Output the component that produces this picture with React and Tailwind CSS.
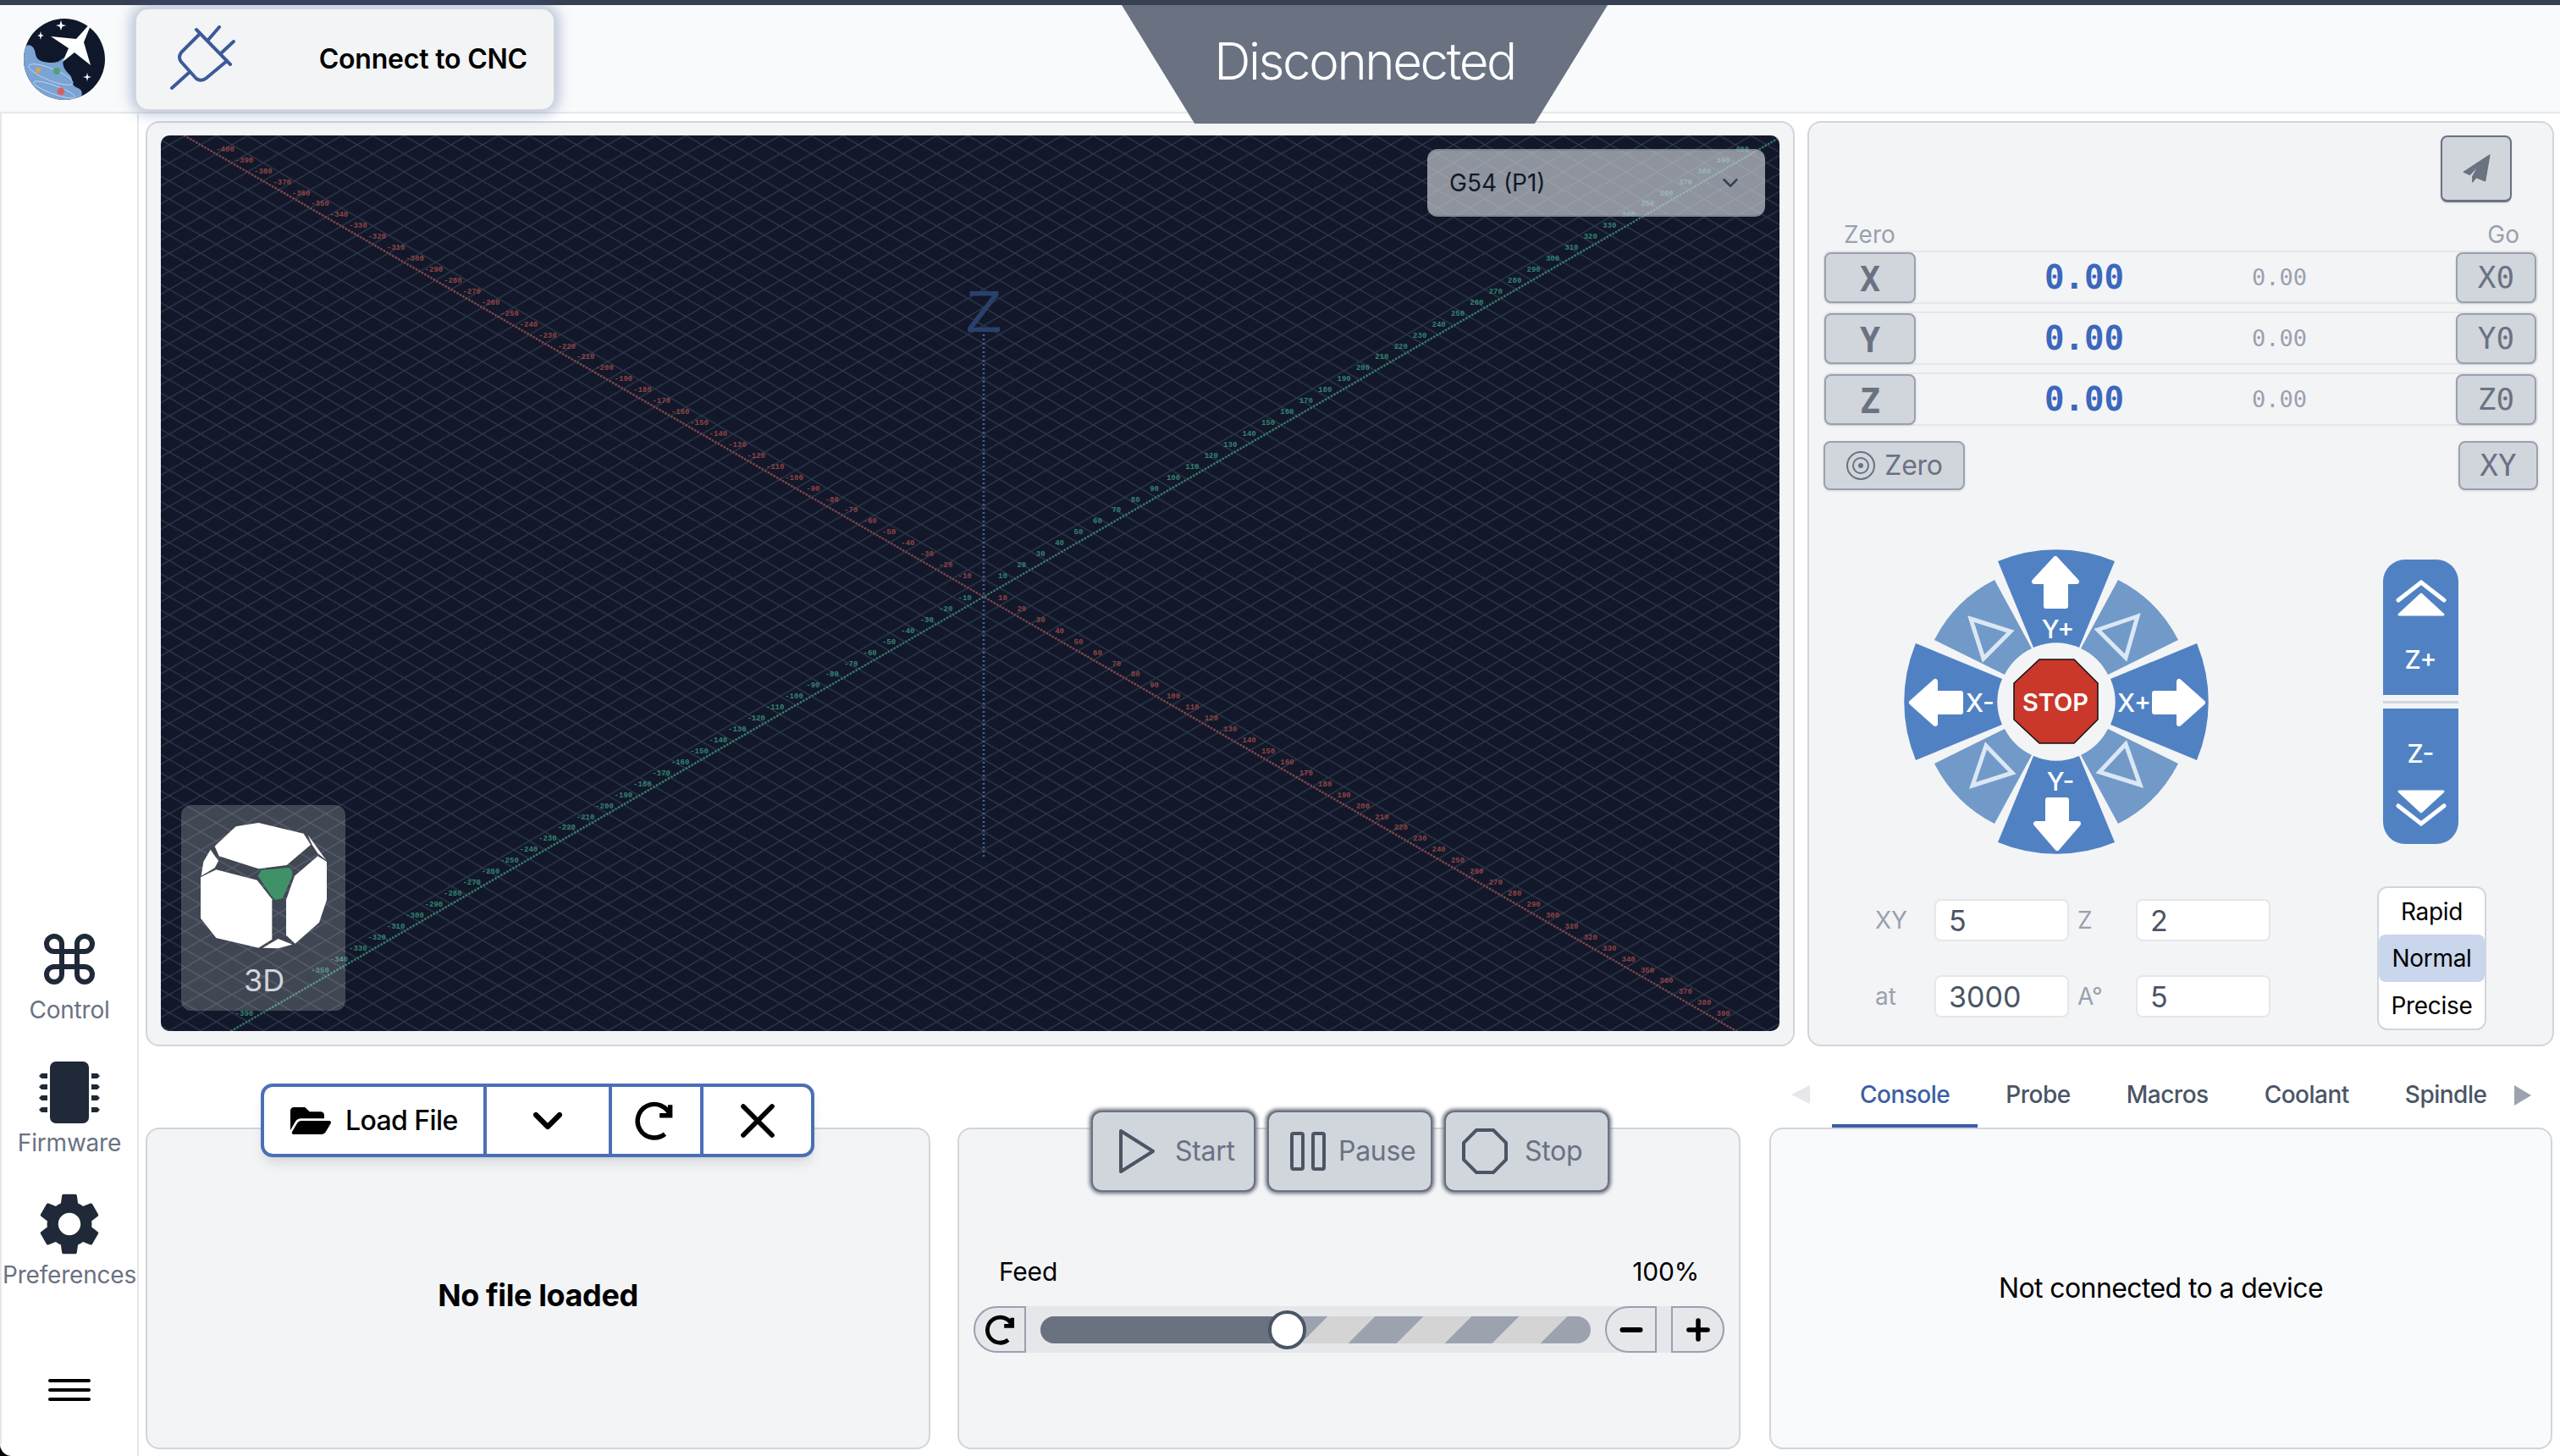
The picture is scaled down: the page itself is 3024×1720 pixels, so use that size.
import { ChevronDown, Command, Minus, Plus, X } from 'lucide-react';
import { FaFolderOpen } from 'react-icons/fa';
import { MdSettings } from 'react-icons/md';

const CX = 972;
const CY = 545;
const RED = '#8f4347';
const GREEN = '#348270';

// axis tick labels, skipping the ones that would hit the canvas edge or the 3D caption
const axisLabels = Array.from({ length: 46 }, (_, i) => i + 1)
  .flatMap((t) => [
    { key: `a${t}`, x: CX - 22.4 * t, y: CY - 12.93 * t - 9, text: -t * 10, fill: RED },
    { key: `b${t}`, x: CX + 22.4 * t, y: CY + 12.93 * t - 9, text: t * 10, fill: RED },
    { key: `c${t}`, x: CX + 22.4 * t, y: CY - 12.93 * t - 9, text: t * 10, fill: GREEN },
    { key: `d${t}`, x: CX - 22.4 * t, y: CY + 12.93 * t - 9, text: -t * 10, fill: GREEN },
  ])
  .filter((l) => l.x > 24 && l.x < 1888 && l.y > 16 && l.y < 1046)
  .filter((l) => !(l.x > 60 && l.x < 180 && l.y > 960 && l.y < 1030));

function RefreshIcon({ size, strokeWidth }) {
  return (
    <svg width={size} height={size} viewBox="0 0 24 24" fill="none" stroke="#000" strokeWidth={strokeWidth} strokeLinecap="butt">
      <path d="M20 3 V9 H14" />
      <path d="M20 9 A9.5 9.5 0 1 0 17 19.5" />
    </svg>
  );
}

function Logo() {
  return (
    <svg width="96" height="96" viewBox="0 0 96 96" className="shrink-0">
      <defs>
        <clipPath id="logoClip">
          <circle cx="48" cy="48" r="48" />
        </clipPath>
      </defs>
      <circle cx="48" cy="48" r="48" fill="#0f172a" />
      <g clipPath="url(#logoClip)">
        <path d="M0 34 C6 28 13 32 14 42 C15 50 24 52 34 52 C42 52 44 48 48 46 C44 54 48 60 54 66 C60 72 54 78 64 82 C70 84 70 90 66 96 L0 96 Z" fill="#7ba3d4" />
        <ellipse cx="32" cy="66" rx="28" ry="7" transform="rotate(22 32 66)" fill="none" stroke="#c9dcf0" strokeWidth="0.8" />
        <ellipse cx="36" cy="84" rx="26" ry="5" transform="rotate(20 36 84)" fill="none" stroke="#c9dcf0" strokeWidth="0.8" />
      </g>
      <circle cx="17" cy="61" r="3.2" fill="#d9a05a" />
      <circle cx="39" cy="62" r="4" fill="#4fa36f" />
      <circle cx="44" cy="86" r="4.4" fill="#d9605a" />
      <path d="M81 3 L62 24 L32 21 L53 35 L46 51 L60 40 L79 55 L71 28 Z" fill="#fff" />
      <path d="M44 2 L45.5 7 L50 8 L45.5 9.5 L44 14 L42.5 9.5 L38 8 L42.5 7 Z" fill="#fff" />
      <path d="M20 15 L21 19 L24 20 L21 21 L20 25 L19 21 L16 20 L19 19 Z" fill="#fff" />
      <path d="M75 64 L76 68 L80 69 L76 70 L75 74 L74 70 L70 69 L74 68 Z" fill="#fff" />
    </svg>
  );
}

function PlugIcon() {
  return (
    <svg width="80" height="80" viewBox="200 30 80 80" fill="none" stroke="#3b5a9a" strokeWidth="4" strokeLinecap="round" strokeLinejoin="round">
      <path d="M231 35 L271 76" />
      <path d="M235 40 L213 62 Q209 68 213 73 L231 93 Q237 97 243 92 L267 72" />
      <path d="M245 47 L258 32" />
      <path d="M260 63 L275 49" />
      <path d="M222 86 L202 104" />
    </svg>
  );
}

function ChipIcon() {
  const pins = [0, 13, 26, 40];
  return (
    <svg width="72" height="73" viewBox="0 0 72 73" fill="#1f2937">
      <rect x="13" y="0" width="46" height="73" rx="7" />
      {pins.map((y) => (
        <g key={y}>
          <path d={`M0 ${y + 17} L3 ${y + 14} H10 V${y + 20} H3 Z`} />
          <path d={`M72 ${y + 17} L69 ${y + 14} H62 V${y + 20} H69 Z`} />
        </g>
      ))}
    </svg>
  );
}

function NavItem({ icon, label, className }) {
  return (
    <div className={`flex flex-col items-center ${className}`}>
      <div className="h-[74px] mb-[6px] flex items-center justify-center">{icon}</div>
      <span className="text-[28px] leading-[34px] tracking-[-0.2px] text-gray-500">{label}</span>
    </div>
  );
}

function Sidebar() {
  return (
    <div className="w-[164px] shrink-0 flex flex-col items-center justify-end bg-white border-r-2 border-l-2 border-gray-200 pb-[65px]">
      <NavItem icon={<Command size={72} color="#1f2937" strokeWidth={2} />} label="Control" className="mb-[43px]" />
      <NavItem icon={<ChipIcon />} label="Firmware" className="mb-[42px]" />
      <NavItem icon={<MdSettings size={88} color="#1f2937" />} label="Preferences" className="mb-[106px]" />
      <div className="w-[50px] flex flex-col gap-[7px]">
        <div className="h-[4px] bg-black rounded-full" />
        <div className="h-[4px] bg-black rounded-full" />
        <div className="h-[4px] bg-black rounded-full" />
      </div>
    </div>
  );
}

function Header() {
  return (
    <div className="h-[128px] shrink-0 relative flex items-start bg-gray-50 border-b-2 border-gray-200">
      <div className="ml-[28px] mt-[16px]">
        <Logo />
      </div>
      <button className="ml-[35px] mt-[3px] w-[497px] h-[122px] flex items-center justify-between pl-[40px] pr-[31px] rounded-[16px] bg-gray-100 border-2 border-gray-300 shadow-[0_0_16px_4px_rgba(59,90,154,0.35)] z-10">
        <PlugIcon />
        <span className="text-[32px] font-semibold tracking-[-0.2px] text-black">Connect to CNC</span>
      </button>
      <div className="absolute left-[1325px] top-0 w-[574px] h-[140px] z-10 flex items-center justify-center pb-[8px] bg-gray-500 [clip-path:polygon(0_0,100%_0,85%_100%,15%_100%)]">
        <span className="text-[60px] font-light tracking-[-2.4px] text-white">Disconnected</span>
      </div>
    </div>
  );
}

function ViewCube() {
  return (
    <div className="absolute left-[24px] top-[791px] w-[194px] h-[243px] rounded-[12px] bg-white/20 flex flex-col items-center pt-[21px] pl-[2px]">
      <svg width="150" height="150" viewBox="145 127 450 450" fill="#fff">
        <polygon points="195,210 270,140 350,127 510,165 535,205 450,277 350,290 210,245" />
        <polygon points="180,222 208,262 195,287 147,315 155,265" />
        <polygon points="145,320 200,293 345,330 398,398 398,540 350,570 200,535 145,465" />
        <polygon points="478,315 560,245 592,265 592,400 565,480 480,555 448,525 448,400" />
        <polygon points="525,170 590,260 560,235 540,205" />
        <polygon points="365,570 420,538 470,558 420,572" />
        <polygon points="348,315 360,295 460,285 470,300 470,315 435,395 410,400 395,385" fill="#3f9268" />
      </svg>
      <span className="mt-[14px] text-[36px] leading-[44px] text-gray-300">3D</span>
    </div>
  );
}

function SceneCanvas() {
  return (
    <svg width="1912" height="1058" className="block [font-family:'Liberation_Mono',monospace]">
      <defs>
        <pattern id="isoGrid" width="37" height="21.36" patternUnits="userSpaceOnUse" patternTransform={`translate(${CX} ${CY})`}>
          <path d="M0 0 L37 21.36 M0 21.36 L37 0" stroke="#2e394c" strokeWidth="1.3" />
        </pattern>
      </defs>
      <rect width="1912" height="1058" fill="#121829" />
      <rect width="1912" height="1058" fill="url(#isoGrid)" />
      <line x1={CX - 1000} y1={CY - 577} x2={CX + 1000} y2={CY + 577} stroke={RED} strokeWidth="2.5" strokeDasharray="2 2" />
      <line x1={CX - 1000} y1={CY + 577} x2={CX + 1000} y2={CY - 577} stroke={GREEN} strokeWidth="2.5" strokeDasharray="2 2" />
      <line x1={CX} y1={235} x2={CX} y2={852} stroke="#46619a" strokeWidth="2.5" strokeDasharray="2 3" />
      <text x={CX} y={232} textAnchor="middle" fontSize="72" fill="#2a3f6a">Z</text>
      <g fontSize="9" fontWeight="700" textAnchor="middle">
        {axisLabels.map((l) => (
          <text key={l.key} x={l.x} y={l.y} fill={l.fill}>{l.text}</text>
        ))}
      </g>
    </svg>
  );
}

function ViewerPanel() {
  return (
    <div className="w-[1948px] h-[1093px] shrink-0 rounded-[16px] border-2 border-gray-300 bg-gray-100 pl-[16px] pt-[15px]">
      <div className="relative w-[1912px] h-[1058px] rounded-[10px] overflow-hidden">
        <SceneCanvas />
        <div className="absolute left-[1496px] top-[16px] w-[399px] h-[80px] rounded-[12px] bg-[#d1d5db]/65 border-y-2 border-gray-500/40 flex items-center justify-between pl-[26px] pr-[26px]">
          <span className="text-[28px] text-gray-900">G54 (P1)</span>
          <ChevronDown size={30} color="#374151" strokeWidth={2} />
        </div>
        <ViewCube />
      </div>
    </div>
  );
}

function AxisRow({ axis, go }) {
  return (
    <div className="h-[63px] flex items-center rounded-[8px] border-2 border-gray-200 [font-family:'DejaVu_Sans_Mono',monospace]">
      <button className="w-[108px] h-[60px] -ml-[1px] rounded-[8px] bg-gray-300 border-2 border-gray-400 shadow-sm text-[40px] font-bold text-gray-500">{axis}</button>
      <span className="ml-[152px] w-[245px] pt-[2px] text-[39px] font-bold text-[#3b67bd]">0.00</span>
      <span className="w-[241px] pt-[2px] text-[27px] text-gray-400">0.00</span>
      <button className="w-[95px] h-[60px] rounded-[8px] bg-gray-300 border-2 border-gray-400 shadow-sm text-[36px] text-gray-500">{go}</button>
    </div>
  );
}

function JogWheel() {
  return (
    <svg width="362" height="362" viewBox="2248 648 362 362" className="shrink-0 [font-family:Inter,sans-serif]">
      <g fill="#719ac8">
        <path d="M2502 685 A161 161 0 0 1 2573 756 L2490 797 A69 69 0 0 0 2458 766 Z" />
        <path d="M2356 685 A161 161 0 0 0 2285 756 L2368 797 A69 69 0 0 1 2400 766 Z" />
        <path d="M2502 973 A161 161 0 0 0 2573 902 L2490 861 A69 69 0 0 1 2458 892 Z" />
        <path d="M2356 973 A161 161 0 0 1 2285 902 L2368 861 A69 69 0 0 0 2400 892 Z" />
      </g>
      <g fill="none" stroke="#dbe7f5" strokeWidth="5">
        <polygon points="2328,731 2375,746 2343,778" />
        <polygon points="2525,728 2478,744 2511,777" />
        <polygon points="2346,881 2377,913 2330,928" />
        <polygon points="2511,879 2480,912 2528,927" />
      </g>
      <g fill="#5082c3">
        <path d="M2360 663 A180 180 0 0 1 2498 663 L2456 765 A69 69 0 0 0 2402 765 Z" />
        <path d="M2360 995 A180 180 0 0 0 2498 995 L2456 893 A69 69 0 0 1 2402 893 Z" />
        <path d="M2595 760 A180 180 0 0 1 2595 898 L2493 856 A69 69 0 0 0 2493 802 Z" />
        <path d="M2263 760 A180 180 0 0 0 2263 898 L2365 856 A69 69 0 0 1 2365 802 Z" />
      </g>
      <g fill="#fff" stroke="#fff" strokeWidth="6" strokeLinejoin="round">
        <path d="M2428 660 L2403 687 H2417 V716 H2440 V687 H2453 Z" />
        <path d="M2430 1002 L2405 973 H2419 V945 H2441 V973 H2455 Z" />
        <path d="M2602 830 L2574 805 V819 H2545 V841 H2574 V855 Z" />
        <path d="M2258 830 L2286 805 V819 H2316 V841 H2286 V855 Z" />
      </g>
      <polygon points="2409,779 2450,779 2478,807 2478,850 2450,878 2409,878 2379,850 2379,807" fill="#c9382b" stroke="#111" strokeWidth="1.5" />
      <g fill="#fff" textAnchor="middle" fontWeight="500" fontSize="30">
        <text x="2428" y="840" fontSize="29" fontWeight="600">STOP</text>
        <text x="2431" y="754">Y+</text>
        <text x="2434" y="934">Y-</text>
        <text x="2521" y="841">X+</text>
        <text x="2339" y="841">X-</text>
      </g>
    </svg>
  );
}

function ZJog() {
  return (
    <div className="w-[89px] shrink-0 mt-[13px] flex flex-col text-white font-medium text-[30px]">
      <button className="h-[160px] rounded-t-[26px] bg-[#5082c3] flex flex-col items-center pt-[24px]">
        <svg width="60" height="44" viewBox="0 0 60 44" fill="none">
          <path d="M3 24 L30 3 L57 24" stroke="#fff" strokeWidth="5" strokeLinecap="round" />
          <path d="M30 17 L56 41 H4 Z" fill="#fff" stroke="#fff" strokeWidth="3" strokeLinejoin="round" />
        </svg>
        <span className="mt-[33px] leading-[34px]">Z+</span>
      </button>
      <div className="h-[16px] flex items-center">
        <div className="h-[3px] w-full bg-gray-300" />
      </div>
      <button className="h-[160px] rounded-b-[26px] bg-[#5082c3] flex flex-col items-center pt-[36px]">
        <span className="leading-[34px]">Z-</span>
        <svg className="mt-[25px]" width="60" height="44" viewBox="0 0 60 44" fill="none">
          <path d="M3 20 L30 41 L57 20" stroke="#fff" strokeWidth="5" strokeLinecap="round" />
          <path d="M30 27 L56 3 H4 Z" fill="#fff" stroke="#fff" strokeWidth="3" strokeLinejoin="round" />
        </svg>
      </button>
    </div>
  );
}

function StepField({ label, value, labelWidth }) {
  return (
    <div className="flex items-center">
      <span className={`text-[28px] text-gray-400 ${labelWidth}`}>{label}</span>
      <div className="w-[159px] h-[50px] rounded-[8px] bg-white border-2 border-gray-200 pl-[15px] flex items-center text-[34px] text-gray-600">{value}</div>
    </div>
  );
}

function ControlPanel() {
  return (
    <div className="flex-1 h-[1093px] rounded-[16px] border-2 border-gray-300 bg-gray-100 px-[17px]">
      <div className="flex justify-end pr-[31px] pt-[15px]">
        <button className="w-[84px] h-[79px] rounded-[8px] bg-gray-300 border-2 border-gray-500 border-b-[3px] shadow-sm flex items-center justify-center">
          <svg width="34" height="34" viewBox="0 0 32 32" fill="#6b7280" stroke="#6b7280" strokeWidth="1.2" strokeLinejoin="round">
            <path d="M31 1 L2 20 L9 23 L19 12 L12 25 L12 31 L16 26 L26 30 Z" />
          </svg>
        </button>
      </div>
      <div className="h-[57px] pt-[21px] flex justify-between text-[28px] leading-[34px] text-gray-400 pl-[24px] pr-[22px]">
        <span>Zero</span>
        <span>Go</span>
      </div>
      <div className="flex flex-col gap-[9px]">
        <AxisRow axis="X" go="X0" />
        <AxisRow axis="Y" go="Y0" />
        <AxisRow axis="Z" go="Z0" />
      </div>
      <div className="mt-[18px] flex justify-between">
        <button className="w-[167px] h-[58px] rounded-[8px] bg-gray-300 border-2 border-gray-400 shadow-sm flex items-center justify-center gap-[10px] text-[32px] tracking-[-0.3px] text-gray-500">
          <svg width="36" height="36" viewBox="0 0 36 36" fill="none" stroke="#6b7280" strokeWidth="2">
            <circle cx="18" cy="18" r="16" />
            <circle cx="18" cy="18" r="9" />
            <circle cx="18" cy="18" r="3" fill="#6b7280" stroke="none" />
          </svg>
          Zero
        </button>
        <button className="w-[94px] h-[58px] rounded-[8px] bg-gray-300 border-2 border-gray-400 shadow-sm text-[36px] text-gray-500 [font-family:'DejaVu_Sans_Mono',monospace]">XY</button>
      </div>
      <div className="mt-[69px] pl-[94px] flex gap-[205px]">
        <JogWheel />
        <ZJog />
      </div>
      <div className="mt-[37px] pl-[61px] flex">
        <div className="pt-[15px] flex flex-col gap-[40px]">
          <div className="flex gap-[10px]">
            <StepField label="XY" value="5" labelWidth="w-[70px]" />
            <StepField label="Z" value="2" labelWidth="w-[69px]" />
          </div>
          <div className="flex gap-[10px]">
            <StepField label="at" value="3000" labelWidth="w-[70px]" />
            <StepField label="A°" value="5" labelWidth="w-[69px]" />
          </div>
        </div>
        <div className="ml-[126px] w-[129px] h-[170px] rounded-[12px] bg-white border-2 border-gray-300 flex flex-col text-[28px] tracking-[-0.3px] text-black">
          <div className="h-[55px] flex items-center justify-center">Rapid</div>
          <div className="h-[56px] flex items-center justify-center rounded-[8px] bg-[#c9d6ec]">Normal</div>
          <div className="h-[55px] flex items-center justify-center">Precise</div>
        </div>
      </div>
    </div>
  );
}

function FilePanel() {
  return (
    <div className="relative w-[927px] shrink-0 pt-[96px]">
      <div className="h-[380px] rounded-[16px] border-2 border-gray-300 bg-gray-100 flex items-center justify-center pt-[16px] text-[36px] font-bold tracking-[-0.4px] text-black">
        No file loaded
      </div>
      <div className="absolute left-[136px] top-[44px] h-[87px] w-[654px] flex rounded-[14px] border-4 border-[#4a6fb5] bg-white shadow-lg text-black divide-x-4 divide-[#4a6fb5]">
        <button className="w-[263px] flex items-center gap-[17px] pl-[31px] text-[32px] font-medium tracking-[-0.6px]">
          <FaFolderOpen size={48} />
          Load File
        </button>
        <button className="w-[148px] flex items-center justify-center">
          <ChevronDown size={56} strokeWidth={2.6} />
        </button>
        <button className="w-[108px] flex items-center justify-center">
          <RefreshIcon size={50} strokeWidth={2.6} />
        </button>
        <button className="flex-1 flex items-center justify-center">
          <X size={68} strokeWidth={2} />
        </button>
      </div>
    </div>
  );
}

function RunButton({ icon, label, gap, className }) {
  return (
    <button className={`h-[96px] rounded-[12px] bg-gray-300 border-2 border-gray-500 shadow-[0_0_4px_2px_#6b7280] flex items-center text-[32px] tracking-[-0.3px] text-gray-500 ${gap} ${className}`}>
      {icon}
      {label}
    </button>
  );
}

function FeedPanel() {
  return (
    <div className="relative w-[925px] shrink-0 ml-[32px] pt-[96px]">
      <div className="h-[380px] rounded-[16px] border-2 border-gray-300 bg-gray-100 pt-[148px] px-[17px]">
        <div className="h-[40px] flex items-center justify-between px-[30px] text-[30px] tracking-[-0.2px] text-black">
          <span>Feed</span>
          <span>100%</span>
        </div>
        <div className="mt-[21px] h-[55px] flex items-center rounded-full bg-gray-200">
          <button className="w-[62px] h-full rounded-l-full border-2 border-gray-400 flex items-center justify-center pl-[4px]">
            <RefreshIcon size={38} strokeWidth={3} />
          </button>
          <div className="relative ml-[17px] w-[651px] h-[32px]">
            <div className="h-full rounded-full bg-[repeating-linear-gradient(135deg,#d4d4d4_0,#d4d4d4_40px,#9ca3af_40px,#9ca3af_80px)]" />
            <div className="absolute left-0 top-0 w-[300px] h-full rounded-l-full bg-gray-500" />
            <div className="absolute left-[269px] -top-[7px] w-[45px] h-[46px] rounded-full bg-white border-4 border-gray-600" />
          </div>
          <button className="ml-[17px] w-[61px] h-full rounded-l-full border-2 border-gray-400 flex items-center justify-center">
            <Minus size={36} strokeWidth={4} color="#000" />
          </button>
          <button className="ml-[17px] w-[63px] h-full rounded-r-full border-2 border-gray-400 flex items-center justify-center">
            <Plus size={38} strokeWidth={3.5} color="#000" />
          </button>
        </div>
      </div>
      <div className="absolute left-[158px] top-[76px] flex gap-[14px]">
        <RunButton
          label="Start"
          gap="gap-[23px]"
          className="w-[194px] pl-[30px]"
          icon={
            <svg width="44" height="54" viewBox="0 0 44 54" fill="none" stroke="#4b5563" strokeWidth="4" strokeLinejoin="round">
              <path d="M3 3 L41 27 L3 51 Z" />
            </svg>
          }
        />
        <RunButton
          label="Pause"
          gap="gap-[15px]"
          className="w-[195px] pl-[25px]"
          icon={
            <svg width="42" height="46" viewBox="0 0 42 46" fill="none" stroke="#4b5563" strokeWidth="4">
              <rect x="2" y="2" width="13" height="42" rx="2" />
              <rect x="27" y="2" width="13" height="42" rx="2" />
            </svg>
          }
        />
        <RunButton
          label="Stop"
          gap="gap-[19px]"
          className="w-[195px] pl-[18px]"
          icon={
            <svg width="56" height="56" viewBox="0 0 56 56" fill="none" stroke="#4b5563" strokeWidth="4">
              <polygon points="18,3 38,3 53,18 53,38 38,53 18,53 3,38 3,18" />
            </svg>
          }
        />
      </div>
    </div>
  );
}

function ConsolePanel() {
  const tabs = ['Console', 'Probe', 'Macros', 'Coolant', 'Spindle'];
  return (
    <div className="w-[925px] shrink-0 ml-[34px]">
      <div className="h-[96px] flex items-end">
        <div className="h-[74px] pl-[26px] w-[74px] flex items-start pt-[24px]">
          <svg width="22" height="22" viewBox="0 0 22 22" fill="#e5e7eb">
            <polygon points="22,0 22,22 0,11" />
          </svg>
        </div>
        {tabs.map((tab, i) => (
          <div
            key={tab}
            className={`h-[74px] px-[33px] pt-[18px] text-[28px] leading-[34px] tracking-[-0.5px] font-medium ${i === 0 ? 'text-[#3b5ea6] border-b-4 border-[#3b5ea6]' : 'text-gray-600'}`}
          >
            {tab}
          </div>
        ))}
        <div className="h-[74px] flex items-start pt-[24px]">
          <svg width="20" height="24" viewBox="0 0 20 24" fill="#9ca3af">
            <polygon points="0,0 20,12 0,24" />
          </svg>
        </div>
      </div>
      <div className="h-[380px] rounded-[16px] border-2 border-gray-300 bg-gray-50 flex items-center justify-center text-[32px] tracking-[-0.6px] text-black">
        Not connected to a device
      </div>
    </div>
  );
}

export default function App() {
  return (
    <div className="relative w-[3024px] h-[1720px] flex flex-col overflow-hidden bg-white [font-family:Inter,sans-serif]">
      <div className="h-[6px] shrink-0 bg-gray-700" />
      <Header />
      <div className="flex-1 flex min-h-0">
        <Sidebar />
        <div className="flex-1 pl-[8px] pr-[9px] pt-[9px] flex flex-col">
          <div className="flex gap-[15px]">
            <ViewerPanel />
            <ControlPanel />
          </div>
          <div className="flex">
            <FilePanel />
            <FeedPanel />
            <ConsolePanel />
          </div>
        </div>
      </div>
      <div className="absolute left-0 bottom-0 w-[14px] h-[14px] bg-black">
        <div className="w-full h-full bg-white rounded-bl-[14px]" />
      </div>
    </div>
  );
}
